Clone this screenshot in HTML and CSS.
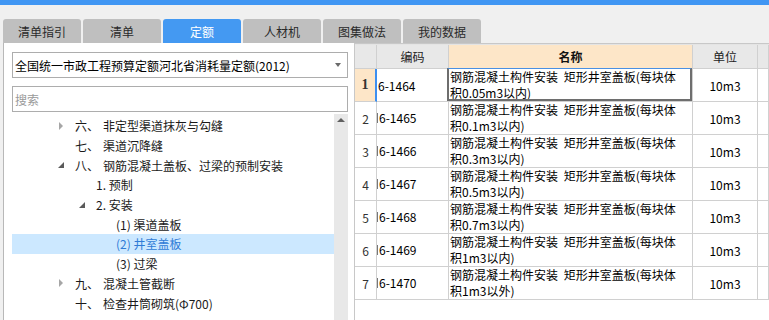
FILE: index.html
```html
<!DOCTYPE html>
<html lang="zh-CN">
<head>
<meta charset="utf-8">
<title>定额</title>
<link rel="stylesheet" href="styles.css">
</head>
<body>
<div class="topbar"></div>
<div class="tabs">
  <div class="tab">清单指引</div>
  <div class="tab">清单</div>
  <div class="tab active">定额</div>
  <div class="tab">人材机</div>
  <div class="tab">图集做法</div>
  <div class="tab">我的数据</div>
</div>
<div class="main">
  <div class="left">
    <div class="select"><span>全国统一市政工程预算定额河北省消耗量定额(2012)</span><i class="caret"></i></div>
    <div class="search">搜索</div>
    <div class="treewrap">
      <div class="tree">
        <div class="row l0"><span class="tg"><i class="tri-r"></i></span><span class="no">六、</span>非定型渠道抹灰与勾缝</div>
        <div class="row l0"><span class="tg"></span><span class="no">七、</span>渠道沉降缝</div>
        <div class="row l0"><span class="tg"><i class="tri-d"></i></span><span class="no">八、</span>钢筋混凝土盖板、过梁的预制安装</div>
        <div class="row l1"><span class="tg"></span>1. 预制</div>
        <div class="row l1"><span class="tg"><i class="tri-d"></i></span>2. 安装</div>
        <div class="row l2"><span class="tg"></span>(1) 渠道盖板</div>
        <div class="row l2 selected"><span class="tg"></span>(2) 井室盖板</div>
        <div class="row l2"><span class="tg"></span>(3) 过梁</div>
        <div class="row l0"><span class="tg"><i class="tri-r"></i></span><span class="no">九、</span>混凝土管截断</div>
        <div class="row l0"><span class="tg"></span><span class="no">十、</span>检查井筒砌筑(Φ700)</div>
      </div>
      <div class="scroll"><i class="up"></i></div>
    </div>
  </div>
  <div class="right">
    <div class="grid">
      <div class="h"></div>
      <div class="h">编码</div>
      <div class="h hn">名称</div>
      <div class="h">单位</div>
      <div class="h"></div>

      <div class="c rn cur">1</div>
      <div class="c code">6-1464</div>
      <div class="c name sel"><span>钢筋混凝土构件安装 矩形井室盖板(每块体</span><span>积0.05m3以内)</span></div>
      <div class="c unit">10m3</div>
      <div class="c"></div>

      <div class="c rn">2</div>
      <div class="c code"><span class="mk">6-1465</span></div>
      <div class="c name"><span>钢筋混凝土构件安装 矩形井室盖板(每块体</span><span>积0.1m3以内)</span></div>
      <div class="c unit">10m3</div>
      <div class="c"></div>

      <div class="c rn">3</div>
      <div class="c code"><span class="mk">6-1466</span></div>
      <div class="c name"><span>钢筋混凝土构件安装 矩形井室盖板(每块体</span><span>积0.3m3以内)</span></div>
      <div class="c unit">10m3</div>
      <div class="c"></div>

      <div class="c rn">4</div>
      <div class="c code"><span class="mk">6-1467</span></div>
      <div class="c name"><span>钢筋混凝土构件安装 矩形井室盖板(每块体</span><span>积0.5m3以内)</span></div>
      <div class="c unit">10m3</div>
      <div class="c"></div>

      <div class="c rn">5</div>
      <div class="c code"><span class="mk">6-1468</span></div>
      <div class="c name"><span>钢筋混凝土构件安装 矩形井室盖板(每块体</span><span>积0.7m3以内)</span></div>
      <div class="c unit">10m3</div>
      <div class="c"></div>

      <div class="c rn">6</div>
      <div class="c code"><span class="mk">6-1469</span></div>
      <div class="c name"><span>钢筋混凝土构件安装 矩形井室盖板(每块体</span><span>积1m3以内)</span></div>
      <div class="c unit">10m3</div>
      <div class="c"></div>

      <div class="c rn">7</div>
      <div class="c code"><span class="mk">6-1470</span></div>
      <div class="c name"><span>钢筋混凝土构件安装 矩形井室盖板(每块体</span><span>积1m3以外)</span></div>
      <div class="c unit">10m3</div>
      <div class="c"></div>
    </div>
  </div>
</div>
</body>
</html>
```
FILE: styles.css
```css
* { box-sizing: border-box; }
html, body { margin: 0; padding: 0; }
body {
  width: 769px;
  height: 320px;
  overflow: hidden;
  background: #f0f0f0;
  font-family: "Noto Sans CJK SC", "Microsoft YaHei", sans-serif;
  font-size: 12px;
  color: #1e1e1e;
}
.topbar { height: 5px; background: #4096f3; }
.tabs {
  display: flex;
  gap: 2px;
  height: 38px;
  padding: 14px 0 0 3px;
}
.tab {
  width: 78px;
  height: 24px;
  background: #bfbfbf;
  border-radius: 3px 3px 0 0;
  display: flex;
  align-items: center;
  justify-content: center;
  color: #2a2a2a;
}
.tab.active { background: #4499f2; color: #fff; }

.main { display: flex; height: 277px; }
.left {
  width: 352px;
  margin-left: 3px;
  background: #fff;
  border-left: 1px solid #b8b8b8;
  border-right: 1px solid #c8c8c8;
  padding: 9px 6px 0 8px;
  display: flex;
  flex-direction: column;
}
.select {
  height: 26px;
  border: 1px solid #adadad;
  display: flex;
  align-items: center;
  justify-content: space-between;
  padding: 0 6px 0 2px;
  color: #000;
}
.caret {
  width: 0; height: 0;
  border-left: 3.5px solid transparent;
  border-right: 3.5px solid transparent;
  border-top: 4px solid #6a6a6a;
}
.search {
  height: 26px;
  margin-top: 8px;
  border: 1px solid #adadad;
  padding-left: 2px;
  display: flex;
  align-items: center;
  color: #9a9a9a;
}
.treewrap { margin-top: 2px; flex: 1; display: flex; min-height: 0; }
.tree { width: 322px; padding-top: 2px; }
.scroll {
  width: 14px;
  background: #e8e8e8;
  display: flex;
  justify-content: center;
  padding-top: 4px;
}
.up {
  width: 0; height: 0;
  border-left: 4px solid transparent;
  border-right: 4px solid transparent;
  border-bottom: 4px solid #606060;
}
.row {
  height: 19.7px;
  display: flex;
  align-items: center;
  white-space: nowrap;
  color: #1a1a1a;
}
.row.l0 { padding-left: 45px; }
.row.l1 { padding-left: 66px; }
.row.l2 { padding-left: 86px; }
.row.selected { background: #cce8ff; color: #2f7bd6; }
.tg { width: 18px; height: 100%; display: flex; align-items: center; flex: none; }
.no { width: 28px; flex: none; }
.tri-r {
  margin-left: 2px;
  width: 0; height: 0;
  border-top: 4px solid transparent;
  border-bottom: 4px solid transparent;
  border-left: 4px solid #a6a6a6;
}
.tri-d {
  margin-left: 1px;
  width: 0; height: 0;
  border-top: 6px solid transparent;
  border-right: 6px solid #5a5a5a;
}

.right {
  flex: 1;
  background: #fff;
  border-top: 1px solid #c8c8c8;
}
.grid {
  display: grid;
  grid-template-columns: 22px 72px 244px 65px 1fr;
  grid-template-rows: 24px repeat(7, 33px);
  border-top: 1px solid #e4e4e4;
  font-size: 12px;
}
.h, .c {
  border-right: 1px solid #d0d0d0;
  border-bottom: 1px solid #d0d0d0;
  display: flex;
  align-items: center;
}
.h {
  background: #e8e8e8;
  justify-content: center;
  color: #222;
}
.h.hn { background: #fde6c8; font-weight: bold; color: #111; }
.c { color: #000; }
.rn { justify-content: center; color: #333; }
.rn.cur {
  background: #fde6c8;
  border-right: 2px solid #3d8ff0;
  font-family: "Liberation Serif", serif;
  font-weight: bold;
  font-size: 14px;
}
.code { padding-left: 1px; }
.mk { border-left: 1px solid #777; line-height: 10px; margin-left: -1px; padding-left: 1px; }
.name {
  flex-direction: column;
  align-items: flex-start;
  justify-content: center;
  line-height: 16px;
  padding-left: 1px;
  word-spacing: 3px;
  white-space: nowrap;
  position: relative;
}
.name span { display: block; height: 16px; }
.unit { justify-content: center; }
.sel::after {
  content: "";
  position: absolute;
  left: -2px;
  top: -1px;
  right: 0;
  bottom: 0;
  border: 2px solid #6e6e6e;
  border-top: 1px solid #4a90e2;
}
```
